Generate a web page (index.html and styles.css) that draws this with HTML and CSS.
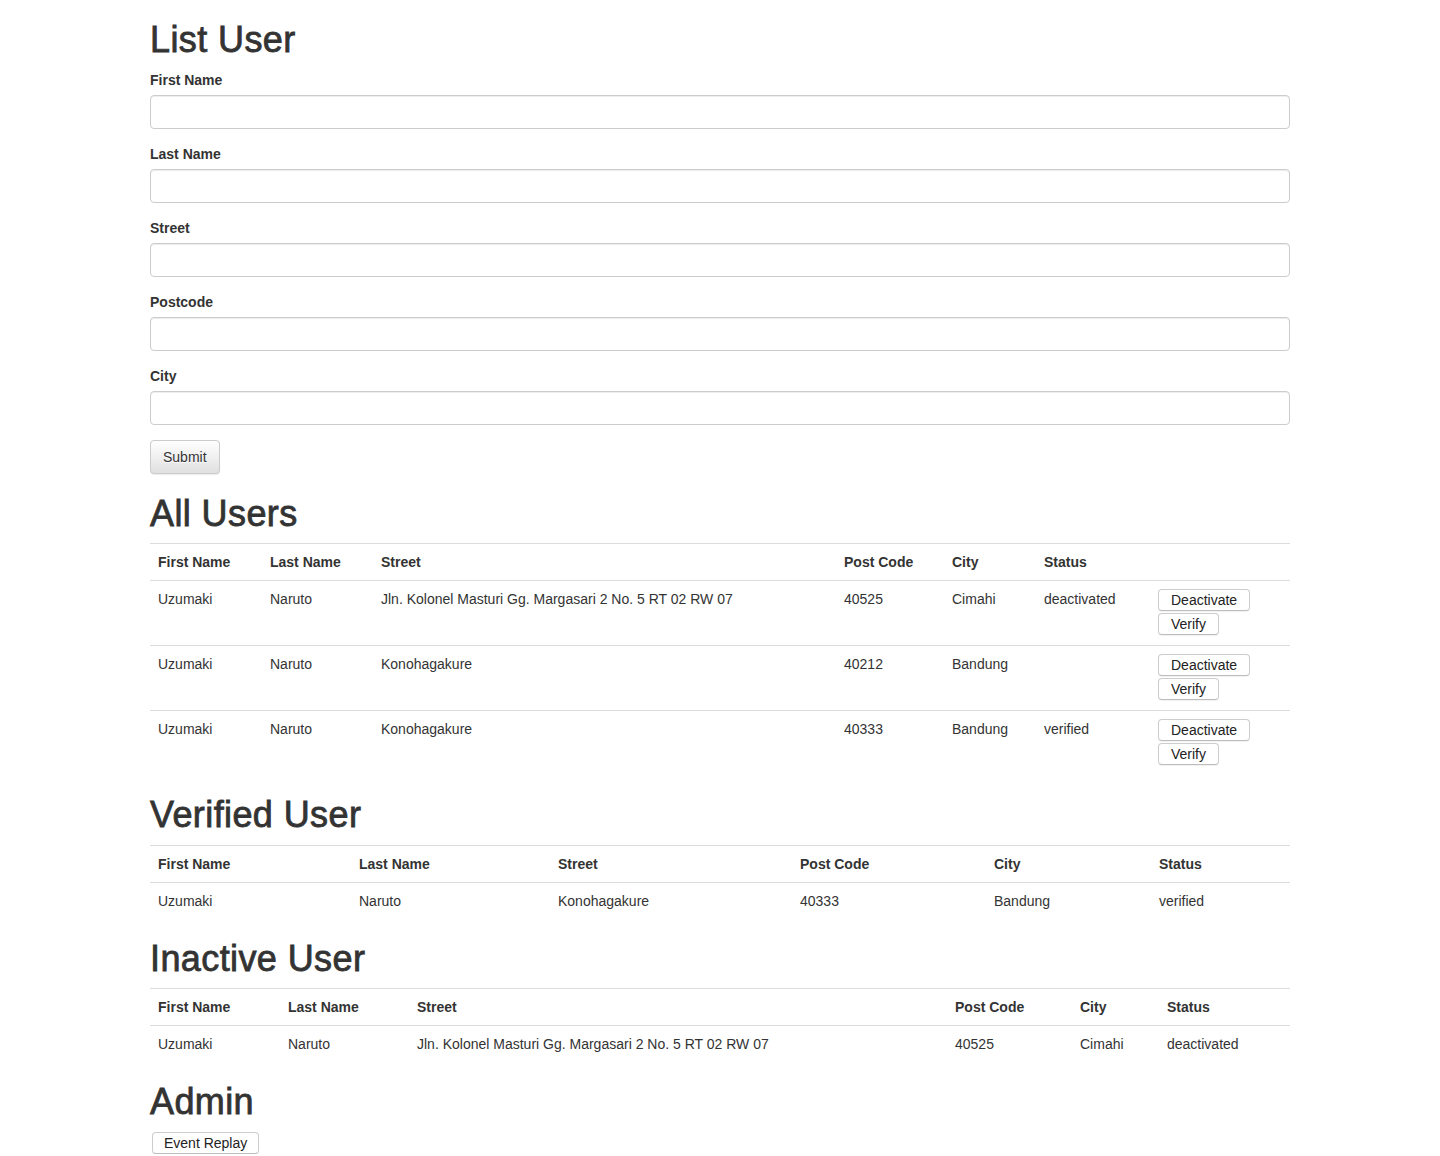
FILE: index.html
```html
<!DOCTYPE html>
<html lang="en">
<head>
<meta charset="utf-8">
<title>List User</title>
<link rel="stylesheet" href="styles.css">
</head>
<body>
<div class="container">
  <h1>List User</h1>
  <form class="user-form">
    <div class="form-group">
      <label>First Name</label>
      <input class="form-control" type="text">
    </div>
    <div class="form-group">
      <label>Last Name</label>
      <input class="form-control" type="text">
    </div>
    <div class="form-group">
      <label>Street</label>
      <input class="form-control" type="text">
    </div>
    <div class="form-group">
      <label>Postcode</label>
      <input class="form-control" type="text">
    </div>
    <div class="form-group">
      <label>City</label>
      <input class="form-control" type="text">
    </div>
    <button type="button" class="btn-default">Submit</button>
  </form>

  <h1>All Users</h1>
  <table class="table t-all">
    <colgroup><col><col><col><col><col><col><col></colgroup>
    <tbody>
      <tr><th>First Name</th><th>Last Name</th><th>Street</th><th>Post Code</th><th>City</th><th>Status</th><th></th></tr>
      <tr><td>Uzumaki</td><td>Naruto</td><td>Jln. Kolonel Masturi Gg. Margasari 2 No. 5 RT 02 RW 07</td><td>40525</td><td>Cimahi</td><td>deactivated</td>
        <td><div class="actions"><button type="button" class="btn-plain">Deactivate</button><button type="button" class="btn-plain">Verify</button></div></td></tr>
      <tr><td>Uzumaki</td><td>Naruto</td><td>Konohagakure</td><td>40212</td><td>Bandung</td><td></td>
        <td><div class="actions"><button type="button" class="btn-plain">Deactivate</button><button type="button" class="btn-plain">Verify</button></div></td></tr>
      <tr><td>Uzumaki</td><td>Naruto</td><td>Konohagakure</td><td>40333</td><td>Bandung</td><td>verified</td>
        <td><div class="actions"><button type="button" class="btn-plain">Deactivate</button><button type="button" class="btn-plain">Verify</button></div></td></tr>
    </tbody>
  </table>

  <h1>Verified User</h1>
  <table class="table t-verified">
    <colgroup><col><col><col><col><col><col></colgroup>
    <tbody>
      <tr><th>First Name</th><th>Last Name</th><th>Street</th><th>Post Code</th><th>City</th><th>Status</th></tr>
      <tr><td>Uzumaki</td><td>Naruto</td><td>Konohagakure</td><td>40333</td><td>Bandung</td><td>verified</td></tr>
    </tbody>
  </table>

  <h1>Inactive User</h1>
  <table class="table t-inactive">
    <colgroup><col><col><col><col><col><col></colgroup>
    <tbody>
      <tr><th>First Name</th><th>Last Name</th><th>Street</th><th>Post Code</th><th>City</th><th>Status</th></tr>
      <tr><td>Uzumaki</td><td>Naruto</td><td>Jln. Kolonel Masturi Gg. Margasari 2 No. 5 RT 02 RW 07</td><td>40525</td><td>Cimahi</td><td>deactivated</td></tr>
    </tbody>
  </table>

  <h1>Admin</h1>
  <div class="admin-actions">
    <button type="button" class="btn-plain">Event Replay</button>
  </div>
</div>
</body>
</html>
```

FILE: styles.css
```css
* { box-sizing: border-box; }

html, body {
  margin: 0;
  padding: 0;
  background: #fff;
}

body {
  font-family: "Liberation Sans", Arial, Helvetica, sans-serif;
  font-size: 14px;
  line-height: 1.42857143;
  color: #333;
}

.container {
  width: 1140px;
  margin: 0 auto;
}

h1 {
  font-size: 36px;
  font-weight: normal;
  line-height: 1.1;
  margin: 20px 0 10px;
  color: #333;
  letter-spacing: 0.4px;
  -webkit-text-stroke: 0.8px #333;
}

.user-form {
  margin: 0;
}

.form-group {
  margin-bottom: 15px;
}

label {
  display: inline-block;
  margin-bottom: 5px;
  font-weight: bold;
}

.form-control {
  display: block;
  width: 100%;
  height: 34px;
  padding: 6px 12px;
  font-family: inherit;
  font-size: 14px;
  color: #555;
  background: #fff;
  border: 1px solid #ccc;
  border-radius: 4px;
  box-shadow: inset 0 1px 1px rgba(0, 0, 0, .075);
}

.btn-default {
  display: inline-block;
  height: 34px;
  padding: 6px 12px;
  font-family: inherit;
  font-size: 14px;
  line-height: 1.42857143;
  color: #333;
  background-color: #e0e0e0;
  background-image: linear-gradient(to bottom, #fff 0, #e0e0e0 100%);
  border: 1px solid #ccc;
  border-radius: 4px;
  text-shadow: 0 1px 0 #fff;
  box-shadow: inset 0 1px 0 rgba(255, 255, 255, .15), 0 1px 1px rgba(0, 0, 0, .075);
  vertical-align: middle;
}

.table {
  width: 100%;
  table-layout: fixed;
  border-collapse: collapse;
  border-spacing: 0;
  margin-bottom: 20px;
}

.table th,
.table td {
  padding: 8px;
  text-align: left;
  vertical-align: top;
  line-height: 1.42857143;
  border-top: 1px solid #ddd;
}

.table th {
  font-weight: bold;
}

.t-all col:nth-child(1) { width: 112px; }
.t-all col:nth-child(2) { width: 111px; }
.t-all col:nth-child(3) { width: 463px; }
.t-all col:nth-child(4) { width: 108px; }
.t-all col:nth-child(5) { width: 92px; }
.t-all col:nth-child(6) { width: 114px; }
.t-all col:nth-child(7) { width: 140px; }

.t-verified col:nth-child(1) { width: 201px; }
.t-verified col:nth-child(2) { width: 199px; }
.t-verified col:nth-child(3) { width: 242px; }
.t-verified col:nth-child(4) { width: 194px; }
.t-verified col:nth-child(5) { width: 165px; }
.t-verified col:nth-child(6) { width: 139px; }

.t-inactive col:nth-child(1) { width: 130px; }
.t-inactive col:nth-child(2) { width: 129px; }
.t-inactive col:nth-child(3) { width: 538px; }
.t-inactive col:nth-child(4) { width: 125px; }
.t-inactive col:nth-child(5) { width: 87px; }
.t-inactive col:nth-child(6) { width: 131px; }

.actions {
  display: flex;
  flex-direction: column;
  align-items: flex-start;
  gap: 2px;
  padding-bottom: 2px;
}

.btn-plain {
  display: inline-block;
  height: 22px;
  padding: 0 12px;
  font-family: inherit;
  font-size: 14px;
  line-height: 20px;
  color: #222;
  background: #fff;
  border: 1px solid #cdcdcd;
  border-bottom-color: #bdbdbd;
  border-radius: 4px;
  box-shadow: 0 1px 1px rgba(0, 0, 0, .06);
}

.admin-actions {
  display: flex;
  padding-left: 2px;
}

.admin-actions .btn-plain {
  padding: 0 11px;
}
```
